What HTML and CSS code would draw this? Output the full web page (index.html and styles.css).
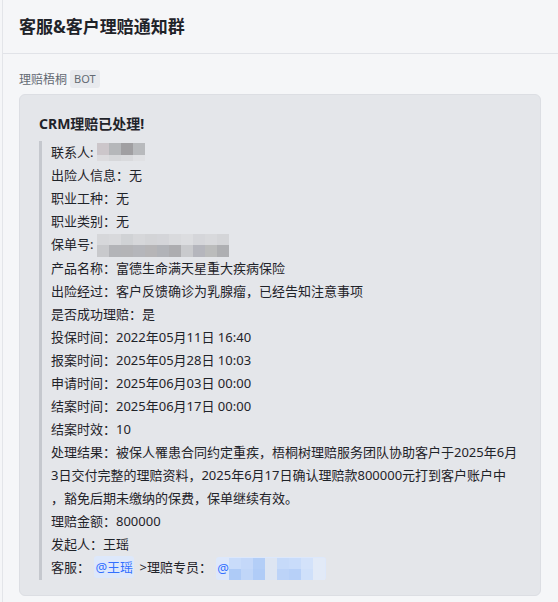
FILE: index.html
```html
<!DOCTYPE html>
<html lang="zh-CN">
<head>
    <meta charset="UTF-8">
    <title>客服&amp;客户理赔通知群</title>
    <link rel="stylesheet" href="styles.css">
</head>
<body>
    <div class="page">
        <div class="chat-header">
            <h1>客服&amp;客户理赔通知群</h1>
        </div>

        <div class="messages">
            <div class="sender">
                <span class="sender-name">理赔梧桐</span>
                <span class="bot-tag">BOT</span>
            </div>

            <div class="card">
                <div class="card-title">CRM理赔已处理!</div>
                <div class="quote">
                    <div class="line">联系人:<span class="mosaic mosaic-name">
                        <i style="background:#ccc6ca"></i><i style="background:#b5b7ba"></i><i style="background:#a09fa2"></i><i style="background:#b8babd"></i>
                        <i style="background:#dcdbde"></i><i style="background:#d6d7da"></i><i style="background:#d9dadd"></i><i style="background:#e0e1e4"></i>
                    </span></div>
                    <div class="line">出险人信息：无</div>
                    <div class="line">职业工种：无</div>
                    <div class="line">职业类别：无</div>
                    <div class="line">保单号:<span class="mosaic mosaic-policy">
                        <i style="background:#d6d7da"></i><i style="background:#d8d9dc"></i><i style="background:#d0d2d5"></i><i style="background:#d6d7da"></i><i style="background:#d3d4d7"></i><i style="background:#d4d5d9"></i><i style="background:#d9dadd"></i><i style="background:#dcdde0"></i><i style="background:#d5d6da"></i><i style="background:#d8d9dc"></i><i style="background:#d4d5d8"></i>
                        <i style="background:#c8c9cc"></i><i style="background:#b3b4b8"></i><i style="background:#b4b4b7"></i><i style="background:#b5b6bb"></i><i style="background:#b6b5b7"></i><i style="background:#b1b3b8"></i><i style="background:#adadb0"></i><i style="background:#c9cacd"></i><i style="background:#b5b6bd"></i><i style="background:#bbbcbc"></i><i style="background:#aeafb2"></i>
                    </span></div>
                    <div class="line">产品名称：富德生命满天星重大疾病保险</div>
                    <div class="line">出险经过：客户反馈确诊为乳腺瘤，已经告知注意事项</div>
                    <div class="line">是否成功理赔：是</div>
                    <div class="line">投保时间：2022年05月11日 16:40</div>
                    <div class="line">报案时间：2025年05月28日 10:03</div>
                    <div class="line">申请时间：2025年06月03日 00:00</div>
                    <div class="line">结案时间：2025年06月17日 00:00</div>
                    <div class="line">结案时效：10</div>
                    <div class="line">处理结果：被保人罹患合同约定重疾，梧桐树理赔服务团队协助客户于2025年6月<br>3日交付完整的理赔资料，2025年6月17日确认理赔款800000元打到客户账户中<br>，豁免后期未缴纳的保费，保单继续有效。</div>
                    <div class="line">理赔金额：800000</div>
                    <div class="line">发起人：王瑶</div>
                    <div class="line">客服： <span class="mention">@王瑶</span> &gt;理赔专员： <span class="mention mention-blur">@<span class="mosaic mosaic-mention">
                        <i style="background:#c9dcfa"></i><i style="background:#c4d8f9"></i><i style="background:#b3cef7"></i><i style="background:#dde5f2"></i><i style="background:#c6daf9"></i><i style="background:#c9dcfa"></i><i style="background:#d3e2fa"></i><i style="background:#e2eaf7"></i>
                        <i style="background:#aecbf7"></i><i style="background:#c0d6f8"></i><i style="background:#b0ccf7"></i><i style="background:#dde5f2"></i><i style="background:#bcd3f8"></i><i style="background:#b7d0f8"></i><i style="background:#cfe0fa"></i><i style="background:#e2eaf7"></i>
                    </span></span></div>
                </div>
            </div>
        </div>
    </div>
</body>
</html>
```

FILE: styles.css
```css
body {
    margin: 0;
    background-color: #f5f6f8;
    font-family: "Noto Sans", "Noto Sans CJK SC", sans-serif;
    color: #1f2329;
}

.page {
    margin-left: 2px;
    border-left: 1px solid #e3e5e9;
    min-height: 602px;
}

.chat-header {
    height: 53px;
    display: flex;
    align-items: center;
    padding-left: 16px;
    border-bottom: 1px solid #e1e3e8;
}

h1 {
    margin: 0;
    font-size: 17px;
    font-weight: 700;
    color: #1f2329;
    padding-bottom: 2px;
}

.messages {
    padding: 16px 17px 0 16px;
}

.sender {
    display: flex;
    align-items: center;
    gap: 3px;
    height: 18px;
    margin-bottom: 6px;
}

.sender-name {
    font-size: 12px;
    color: #646a73;
}

.bot-tag {
    font-size: 11px;
    color: #646a73;
    background-color: #e8eaee;
    border-radius: 3px;
    padding: 0 4px;
    line-height: 18px;
}

.card {
    background-color: #e4e6ea;
    border: 1px solid #dcdee3;
    border-radius: 6px;
    padding: 19px 20px 15px 19px;
}

.card-title {
    font-size: 14px;
    font-weight: 700;
    line-height: 20px;
    margin-bottom: 7px;
}

.quote {
    border-left: 3px solid #c5c8ce;
    padding-left: 9px;
    font-size: 13px;
    line-height: 23px;
}

.line {
    white-space: nowrap;
}

.mosaic {
    display: inline-grid;
    vertical-align: middle;
}

.mosaic i {
    display: block;
}

.mosaic-name {
    grid-template-columns: repeat(4, 12px);
    grid-template-rows: 12px 6px;
    margin-top: -4px;
    margin-left: 4px;
}

.mosaic-policy {
    grid-template-columns: repeat(11, 12px);
    grid-template-rows: 11px 12px;
    margin-left: 4px;
}

.mention {
    color: #3370ff;
    background-color: #dde8fb;
    border-radius: 3px;
    padding: 2px 1px;
    margin: 0 2px 0 1px;
}

.mention-blur {
    display: inline-flex;
    align-items: center;
    vertical-align: middle;
    padding: 0 1px;
}

.mosaic-mention {
    grid-template-columns: repeat(8, 12px);
    grid-template-rows: 11px 11px;
}
```
